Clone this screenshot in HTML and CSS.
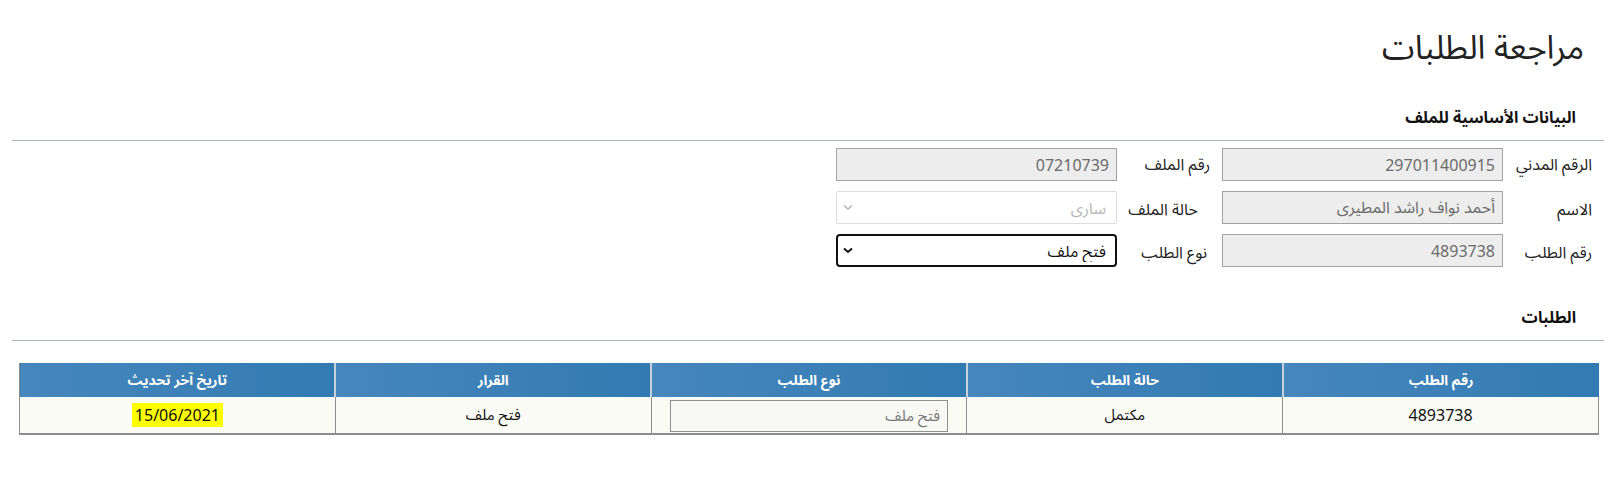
FILE: index.html
```html
<!DOCTYPE html>
<html lang="ar" dir="rtl">
<head>
    <meta charset="UTF-8">
    <meta name="viewport" content="width=device-width, initial-scale=1.0">
    <title>مراجعة الطلبات</title>
    <link rel="stylesheet" href="styles.css">
</head>
<body>
    <div class="page">
        <h1 class="page-title">مراجعة الطلبات</h1>

        <div class="panel panel-file">
            <h2 class="panel-title">البيانات الأساسية للملف</h2>
            <div class="form-grid">
                <label class="field-label">الرقم المدني</label>
                <input class="field-input" type="text" value="297011400915" readonly>
                <label class="field-label">رقم الملف</label>
                <input class="field-input" type="text" value="07210739" readonly>

                <label class="field-label field-low">الاسم</label>
                <input class="field-input" type="text" value="أحمد نواف راشد المطيرى" readonly>
                <label class="field-label field-low shift-lg">حالة الملف</label>
                <div class="select-wrap">
                    <select class="field-select" disabled>
                        <option>ساري</option>
                    </select>
                    <svg class="chevron chevron-muted" width="10" height="7" viewBox="0 0 10 7"><path d="M1 1.5 L5 5 L9 1.5" fill="none" stroke="currentColor" stroke-width="1.4"/></svg>
                </div>

                <label class="field-label field-low">رقم الطلب</label>
                <input class="field-input" type="text" value="4893738" readonly>
                <label class="field-label field-low shift-sm">نوع الطلب</label>
                <div class="select-wrap">
                    <select class="field-select is-focused">
                        <option>فتح ملف</option>
                    </select>
                    <svg class="chevron" width="10" height="7" viewBox="0 0 10 7"><path d="M1 1.5 L5 5 L9 1.5" fill="none" stroke="currentColor" stroke-width="2"/></svg>
                </div>
            </div>
        </div>

        <div class="panel panel-requests">
            <h2 class="panel-title">الطلبات</h2>
            <table class="grid">
                <thead>
                    <tr>
                        <th>رقم الطلب</th>
                        <th>حالة الطلب</th>
                        <th>نوع الطلب</th>
                        <th>القرار</th>
                        <th>تاريخ آخر تحديث</th>
                    </tr>
                </thead>
                <tbody>
                    <tr>
                        <td class="num">4893738</td>
                        <td>مكتمل</td>
                        <td><input class="cell-input" type="text" value="فتح ملف" readonly></td>
                        <td>فتح ملف</td>
                        <td class="num"><span class="highlight">15/06/2021</span></td>
                    </tr>
                </tbody>
            </table>
        </div>
    </div>
</body>
</html>
```

FILE: styles.css
```css
body {
    margin: 0;
    background-color: #fff;
    font-family: "Noto Sans", "Noto Sans Arabic", "DejaVu Sans", sans-serif;
    color: #222;
}
.page {
    padding: 0 14px 0 12px;
}
.page-title {
    margin: 0;
    padding: 25px 20px 0 0;
    font-size: 33px;
    font-weight: normal;
    line-height: 44px;
    color: #222;
}
.panel {
    margin-top: 36px;
}
.panel-requests {
    margin-top: 38px;
}
.panel-title {
    margin: 0;
    padding: 0 28px 11px 0;
    font-size: 16px;
    font-weight: bold;
    line-height: 24px;
    color: #111;
    border-bottom: 1px solid #aab1b8; /* linea separadora */
}
.form-grid {
    display: grid;
    grid-template-columns: 101px 281px 105px 281px;
    grid-auto-rows: 33px;
    row-gap: 10px;
    margin-top: 7px;
}
.field-label {
    display: flex;
    align-items: center;
    padding-right: 12px;
    font-size: 16px;
    color: #222;
}
.field-low {
    padding-top: 4px;
}
.shift-sm {
    padding-right: 15px;
}
.shift-lg {
    padding-right: 24px;
}
.field-input {
    box-sizing: border-box;
    width: 281px;
    height: 33px;
    margin: 0;
    padding: 0 7px;
    border: 1px solid #a3a3a3;
    background-color: #ededed;
    font-family: inherit;
    font-size: 16px;
    color: #6b6b6b;
    text-align: right;
    outline: none;
}
.select-wrap {
    position: relative;
    width: 281px;
    height: 33px;
}
.field-select {
    box-sizing: border-box;
    width: 100%;
    height: 100%;
    margin: 0;
    padding: 0 10px 0 24px;
    border: 1px solid #cfcfcf;
    border-radius: 2px;
    background-color: #fff;
    font-family: inherit;
    font-size: 16px;
    color: #9a9a9a;
    -webkit-appearance: none;
    appearance: none;
}
.field-select.is-focused {
    border: 2px solid #111;
    border-radius: 4px;
    color: #111;
    padding-right: 9px;
}
.chevron {
    position: absolute;
    left: 7px;
    top: 13px;
    color: #111;
    pointer-events: none;
}
.chevron-muted {
    color: #b3b3b3;
}
.grid {
    width: 1580px;
    margin: 22px 5px 0 7px;
    border-collapse: collapse;
    table-layout: fixed;
}
.grid th {
    height: 34px;
    padding: 0;
    font-size: 14px;
    font-weight: bold;
    color: #fff;
    background: linear-gradient(to right, #4687bd, #327ab2);
    border-left: 2px solid #c7d2dc;
}
.grid th:last-child {
    border-left: 1px solid #8d8d8d;
}
.grid td {
    height: 36px;
    padding: 0;
    text-align: center;
    font-size: 15px;
    color: #111;
    background-color: #fbfbf5;
    border-left: 1px solid #8d8d8d;
    border-right: 1px solid #8d8d8d;
    border-bottom: 2px solid #8d8d8d;
}
.grid .num {
    font-size: 16px;
}
.cell-input {
    box-sizing: border-box;
    width: 278px;
    height: 32px;
    margin: 2px 0 0;
    padding: 0 7px;
    border: 1px solid #8f8f8f;
    background-color: #f8f8f4;
    font-family: inherit;
    font-size: 15px;
    color: #777;
    text-align: right;
    outline: none;
}
.highlight {
    background-color: #ffff00; /* fecha resaltada */
    padding: 1px 3px;
}
```
